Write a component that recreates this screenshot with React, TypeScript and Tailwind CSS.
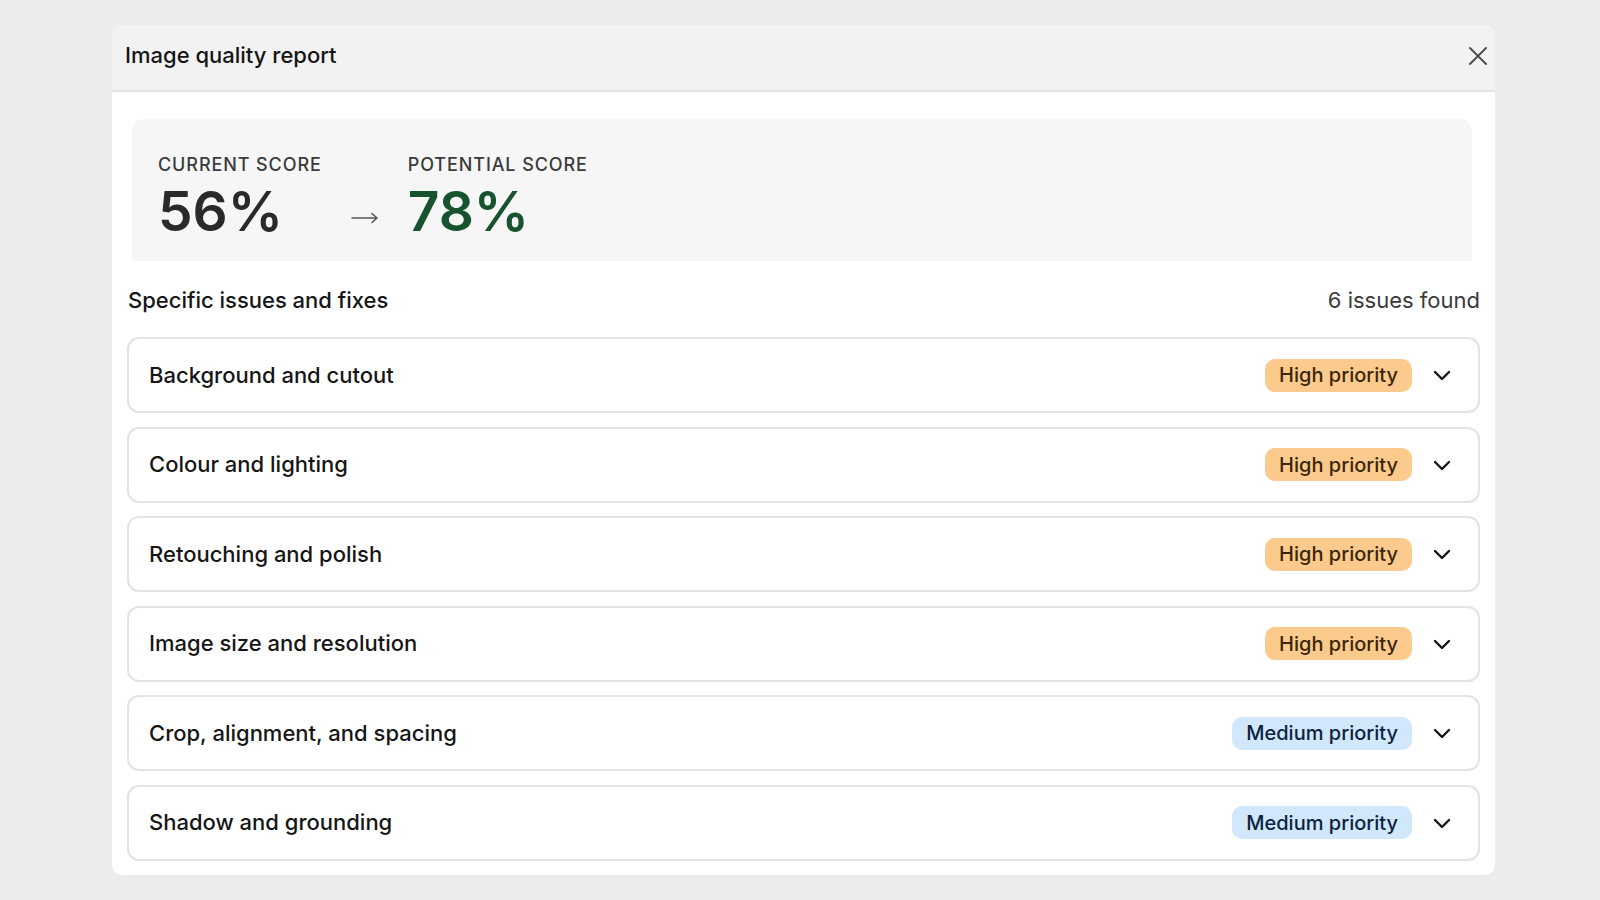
const issues = [
  { title: "Background and cutout", priority: "high" },
  { title: "Colour and lighting", priority: "high" },
  { title: "Retouching and polish", priority: "high" },
  { title: "Image size and resolution", priority: "high" },
  { title: "Crop, alignment, and spacing", priority: "medium" },
  { title: "Shadow and grounding", priority: "medium" },
];

function Chevron() {
  return (
    <svg width="18" height="12" viewBox="0 0 18 12" fill="none" className="shrink-0">
      <path d="M2 3l7 7 7-7" stroke="#141414" strokeWidth="2.4" strokeLinecap="round" strokeLinejoin="round" />
    </svg>
  );
}

function Badge({ priority }: { priority: string }) {
  if (priority === "high") {
    return (
      <span className="rounded-[10px] bg-[#fcca8c] px-[14px] h-[33px] flex items-center text-[20px] font-medium text-[#3a2608]">
        High priority
      </span>
    );
  }
  return (
    <span className="rounded-[10px] bg-[#d1e7fb] px-[14px] h-[33px] flex items-center text-[20px] font-medium text-[#0c2340]">
      Medium priority
    </span>
  );
}

export default function App() {
  return (
    <div className="min-h-screen bg-[#ececec] pt-[25px] font-['Inter',sans-serif]">
      <div className="ml-[112px] w-[1383px] rounded-[10px] bg-white overflow-hidden">
        <div className="h-[67px] bg-[#f2f2f2] border-b-2 border-[#e4e4e4] flex items-center justify-between pl-[13px] pr-[8px]">
          <h1 className="text-[22px] font-medium text-[#161616] -mt-[5px]">Image quality report</h1>
          <svg width="18" height="18" viewBox="0 0 18 18" fill="none" className="-mt-[4px]">
            <path d="M1 1l16 16M17 1L1 17" stroke="#4a4a4a" strokeWidth="1.8" strokeLinecap="round" />
          </svg>
        </div>

        <div className="px-[15px] pt-[27px] pb-[14px]">
          <div className="ml-[5px] mr-[8px] h-[142px] rounded-t-[12px] bg-[#f6f6f6] pl-[26px] pt-[32px] flex items-start">
            <div>
              <p className="text-[18px] font-medium tracking-[0.05em] text-[#3b3b3b]">CURRENT SCORE</p>
              <p className="text-[55px] leading-none font-semibold text-[#2a2a2a] mt-[6px]">56%</p>
            </div>
            {/* thin arrow between the two scores */}
            <svg width="28" height="12" viewBox="0 0 28 12" fill="none" className="ml-[29px] mt-[61px] shrink-0">
              <path d="M1 6h25M21 1.5L26 6l-5 4.5" stroke="#555555" strokeWidth="1.6" strokeLinecap="round" strokeLinejoin="round" />
            </svg>
            <div className="ml-[29px]">
              <p className="text-[18px] font-medium tracking-[0.05em] text-[#3b3b3b]">POTENTIAL SCORE</p>
              <p className="text-[55px] leading-none font-semibold text-[#17532f] mt-[6px]">78%</p>
            </div>
          </div>

          <div className="flex items-center justify-between mt-[23px] mb-[20px] pl-[1px]">
            <h2 className="text-[22px] font-medium text-[#161616]">Specific issues and fixes</h2>
            <span className="text-[22px] text-[#3a3a3a]">6 issues found</span>
          </div>

          <div className="flex flex-col gap-[13.5px]">
            {issues.map((issue) => (
              <div
                key={issue.title}
                className="h-[76px] rounded-[12px] border-2 border-[#e3e3e3] bg-white flex items-center justify-between pl-[20px] pr-[27px]"
              >
                <span className="text-[22px] font-medium text-[#161616]">{issue.title}</span>
                <div className="flex items-center gap-[21px]">
                  <Badge priority={issue.priority} />
                  <Chevron />
                </div>
              </div>
            ))}
          </div>
        </div>
      </div>
    </div>
  );
}
